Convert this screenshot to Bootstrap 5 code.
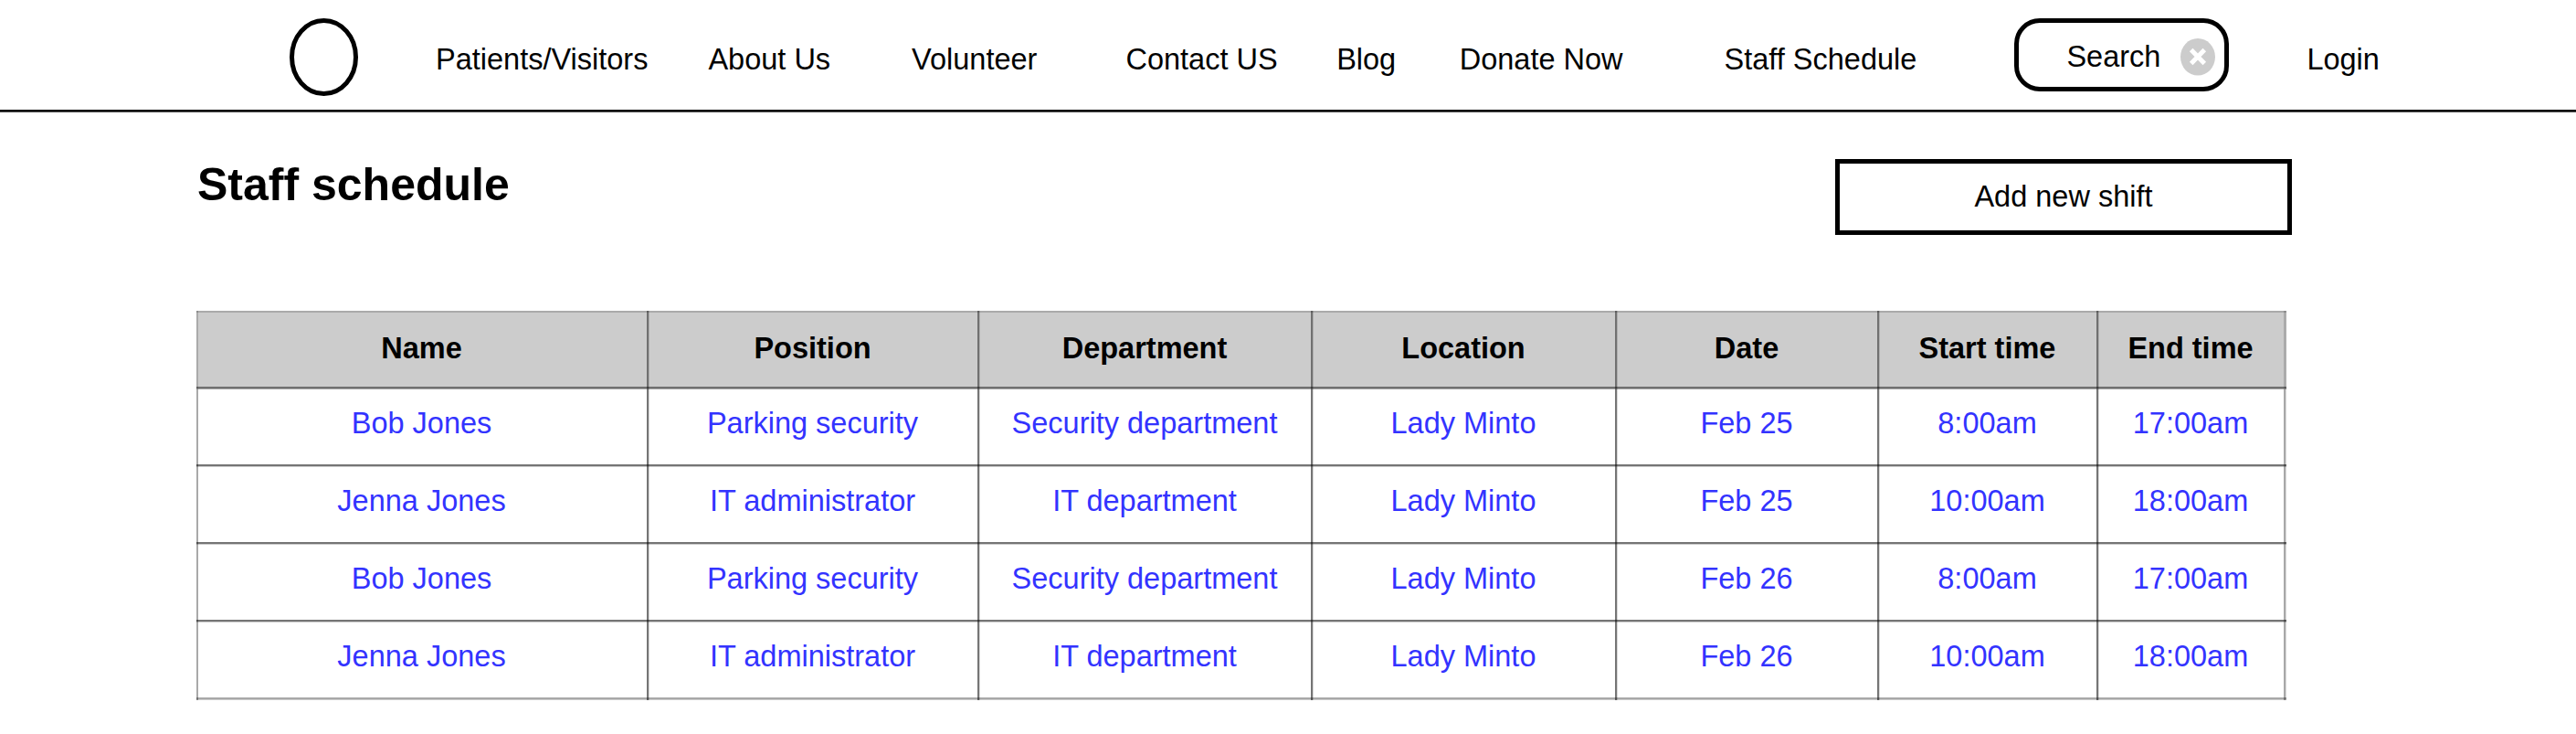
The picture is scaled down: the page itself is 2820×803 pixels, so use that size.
<!DOCTYPE html>
<html lang="en">
<head>
<meta charset="utf-8">
<meta name="viewport" content="width=device-width, initial-scale=1">
<title>Staff schedule</title>
<link href="https://cdn.jsdelivr.net/npm/bootstrap@5.3.0/dist/css/bootstrap.min.css" rel="stylesheet">
<style>
body{font-family:"Liberation Sans",Arial,sans-serif;font-size:32.5px;line-height:37px;color:#000;background:#fff;overflow:hidden}
.site-bar{height:123px;border-bottom:1px solid #555;box-shadow:inset 0 -2px #000;padding:0 0 0 317px}
.site-bar .navbar-nav{margin-left:85px}
.site-bar .navbar-nav .nav-link{color:#000;padding:0;white-space:nowrap;margin-top:8px}
.logo{width:75px;height:85px;margin-top:3px}
.search{width:235px;height:80px;flex:none;border:5px solid #000;border-radius:28px;margin:-2px 0 0 107px;padding:3px 10px 0 0}
.search span{padding-top:1px}
.search svg{width:38px;height:41px;margin-left:22px;margin-top:1px}
.g1{margin-left:66px}.g2{margin-left:89px}.g3{margin-left:97px}.g4{margin-left:64.5px}.g5{margin-left:69.5px}.g6{margin-left:111px}
.page-main{padding:0 311px 0 215px}
.page-head{height:217px;padding-top:51px}
.page-head h1{font-size:50px;line-height:56px;font-weight:700;margin:0 0 0 1px}
.btn-shift{width:500px;height:83px;border:5px solid #000;border-radius:0;font-size:32.5px;line-height:37px;color:#000;background:#fff;padding:0}
.schedule{width:2288px;table-layout:fixed;border-collapse:separate;border-spacing:0;text-align:center;margin:0;
  background:linear-gradient(#a9a9a9,#a9a9a9) 0 0/2px 100% no-repeat}
/* Translucent rules on the right and bottom of each cell darken where they cross */
.schedule th,.schedule td{
  --ink:rgba(0,0,0,.54);--v:var(--ink);--h:var(--ink);--t:transparent;--l:transparent;
  padding:0 5px 10px 0;vertical-align:middle;
  background-image:
    linear-gradient(to right,var(--v) 2px,rgba(0,0,0,.15) 2px),
    linear-gradient(to bottom,var(--h) 2px,rgba(0,0,0,.2) 2px),
    linear-gradient(var(--t),var(--t)),
    linear-gradient(var(--l),var(--l));
  background-size:3px 100%,100% 3px,100% 2px,2px 100%;
  background-position:right top,left bottom,left top,left top;
  background-repeat:no-repeat}
.schedule th{--ink:rgba(0,0,0,.45);--t:rgba(0,0,0,.17);background-color:#ccc;height:86px;color:#000;padding-bottom:3px}
.schedule td{height:85px;color:#33f}
.schedule tr>:first-child{padding-right:3px}
.schedule th:first-child{--l:rgba(0,0,0,.17)}
.schedule td:last-child{--v:rgba(0,0,0,.34)}
.schedule th:last-child{--v:rgba(0,0,0,.17)}
.schedule tr:last-child td{--h:rgba(0,0,0,.34)}
</style>
</head>
<body>
<header>
<nav class="site-bar navbar navbar-expand flex-nowrap align-items-center">
<a href="#" aria-label="Home" class="d-flex"><svg class="logo" viewBox="0 0 75 85"><ellipse cx="37.5" cy="42.5" rx="35" ry="40" fill="#fff" stroke="#000" stroke-width="5"/></svg></a>
<div class="navbar-nav">
<a class="nav-link" href="#">Patients/Visitors</a>
<a class="nav-link g1" href="#">About Us</a>
<a class="nav-link g2" href="#">Volunteer</a>
<a class="nav-link g3" href="#">Contact US</a>
<a class="nav-link g4" href="#">Blog</a>
<a class="nav-link g5" href="#">Donate Now</a>
<a class="nav-link g6" href="#">Staff Schedule</a>
</div>
<div class="search d-flex align-items-center justify-content-end"><span>Search</span><svg viewBox="0 0 38 41"><ellipse cx="19" cy="20.3" rx="19" ry="20.3" fill="#ccc"/><path d="M11.7 12.5 26.3 27.5M26.3 12.5 11.7 27.5" stroke="#fff" stroke-width="5"/></svg></div>
<div class="navbar-nav"><a class="nav-link" href="#">Login</a></div>
</nav>
</header>
<main class="page-main">
<div class="page-head d-flex justify-content-between align-items-start">
<h1>Staff schedule</h1>
<button class="btn btn-shift" type="button">Add new shift</button>
</div>
<table class="schedule">
<colgroup><col style="width:496px"><col style="width:362px"><col style="width:365px"><col style="width:333px"><col style="width:287px"><col style="width:240px"><col style="width:205px"></colgroup>
<thead><tr><th>Name</th><th>Position</th><th>Department</th><th>Location</th><th>Date</th><th>Start time</th><th>End time</th></tr></thead>
<tbody>
<tr><td>Bob Jones</td><td>Parking security</td><td>Security department</td><td>Lady Minto</td><td>Feb 25</td><td>8:00am</td><td>17:00am</td></tr>
<tr><td>Jenna Jones</td><td>IT administrator</td><td>IT department</td><td>Lady Minto</td><td>Feb 25</td><td>10:00am</td><td>18:00am</td></tr>
<tr><td>Bob Jones</td><td>Parking security</td><td>Security department</td><td>Lady Minto</td><td>Feb 26</td><td>8:00am</td><td>17:00am</td></tr>
<tr><td>Jenna Jones</td><td>IT administrator</td><td>IT department</td><td>Lady Minto</td><td>Feb 26</td><td>10:00am</td><td>18:00am</td></tr>
</tbody>
</table>
</main>
<script src="https://cdn.jsdelivr.net/npm/bootstrap@5.3.0/dist/js/bootstrap.bundle.min.js"></script>
</body>
</html>
